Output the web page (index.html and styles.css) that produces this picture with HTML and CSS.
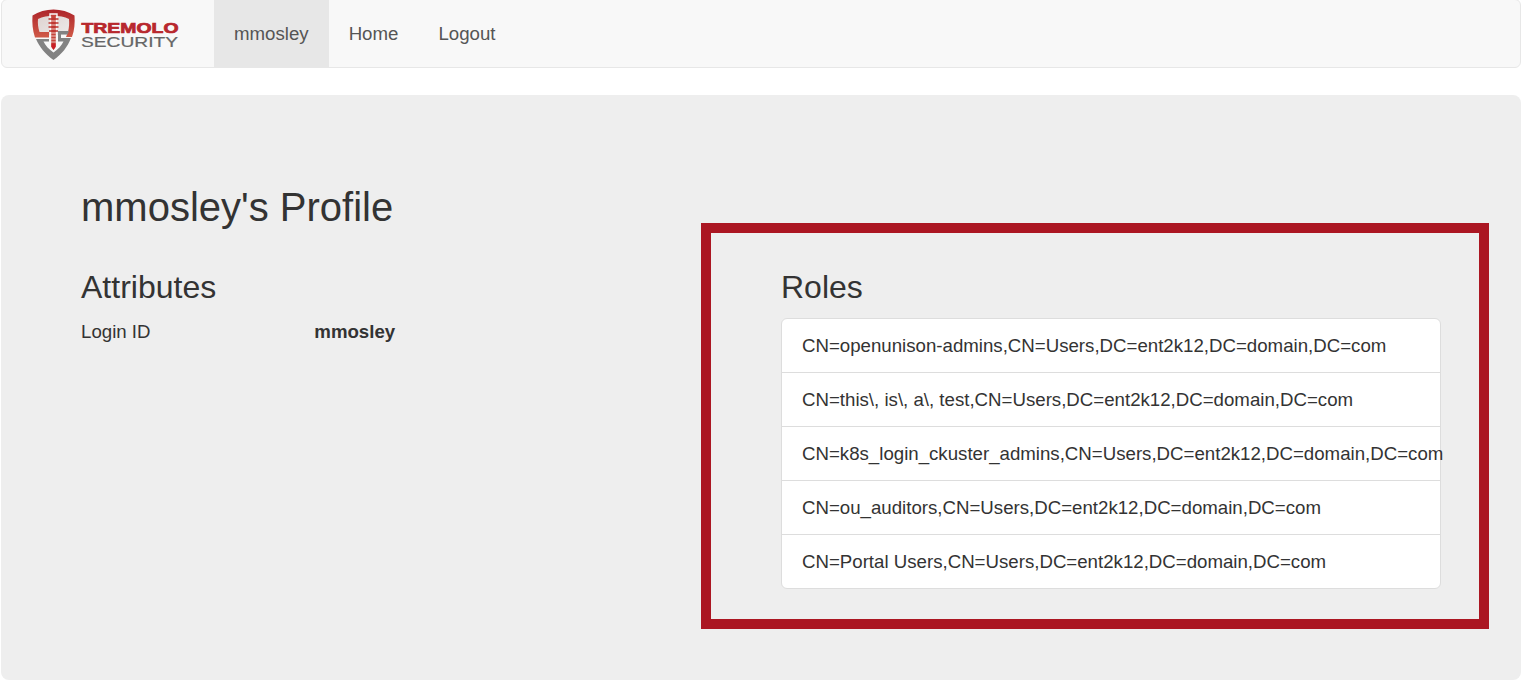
FILE: index.html
```html
<!DOCTYPE html>
<html lang="en">
<head>
<meta charset="utf-8">
<title>mmosley's Profile</title>
<link rel="stylesheet" href="styles.css">
</head>
<body>
<nav class="navbar">
  <a class="brand" aria-label="Tremolo Security">
    <svg class="logo" width="150" height="54" viewBox="30 7 150 54">
      <defs>
        <linearGradient id="red" x1="0" y1="0" x2="0" y2="1">
          <stop offset="0" stop-color="#ad2429"/>
          <stop offset="1" stop-color="#d05a48"/>
        </linearGradient>
        <linearGradient id="shade" x1="0" y1="0" x2="1" y2="1">
          <stop offset="0" stop-color="#dccfcc"/>
          <stop offset="1" stop-color="#eeeceb"/>
        </linearGradient>
      </defs>
      <path d="M53.500 12C47 12 40 13.500 35 17C34.500 24 35 30 37 35H70C72 30 72.500 24 72 17C67 13.500 60 12 53.500 12Z" fill="url(#shade)"/>
      <path d="M53.500 9.500C46 9.500 38.500 11.500 32.500 15.500C32 23 32.500 30 35 37.500H49V32H39.500C38 27 37.600 23 38 19C42.500 16.500 48 16 53.500 16S64.500 16.500 69 19C69.400 23 69.200 27 68 32L66 37H72C74.500 30 75 23 74.500 15.500C68.500 11.500 61 9.500 53.500 9.500Z" fill="url(#red)"/>
      <path d="M36 39H49V41.500H43.500C45.500 45.500 49 49.500 53.500 52.500C58 49.500 61.500 45.500 63.500 41.500H58V31H69L67.500 34.500H61V38H71C67.500 47 62 54 53.500 60C45 54 39.500 47 36 39Z" fill="#828282"/>
      <path d="M50 14H57V17H56.500V47L53.500 51L50.500 47V17H50Z" fill="#c5453c" stroke="#f8f8f8" stroke-width="1.400"/>
      <path d="M48.500 19H58.500M48.500 23H58.500M48.500 27H58.500M49 31H58" stroke="#bd352f" stroke-width="1.500"/>
      <path d="M51 21H56M51 25H56M51 29H56M51 33H56M51 36H56M51 39H56M51 42H56" stroke="#f0cfcb" stroke-width="0.900"/>
      <path d="M51.500 43.500H55.500V47L53.500 50L51.500 47Z" fill="#ca2027"/>
      <text class="wordmark-top" x="81.500" y="33" textLength="97" lengthAdjust="spacingAndGlyphs">TREMOLO</text>
      <text class="wordmark-bottom" x="81" y="46.800" textLength="97" lengthAdjust="spacingAndGlyphs">SECURITY</text>
    </svg>
  </a>
  <a class="nav-link active">mmosley</a>
  <a class="nav-link">Home</a>
  <a class="nav-link">Logout</a>
</nav>
<main class="jumbotron">
  <h2 class="title">mmosley's Profile</h2>
  <div class="columns">
    <section class="attributes">
      <h3 class="heading">Attributes</h3>
      <div class="attribute"><span>Login ID</span><strong>mmosley</strong></div>
    </section>
    <section class="roles">
      <h3 class="heading">Roles</h3>
      <ul class="role-list">
        <li>CN=openunison-admins,CN=Users,DC=ent2k12,DC=domain,DC=com</li>
        <li>CN=this\, is\, a\, test,CN=Users,DC=ent2k12,DC=domain,DC=com</li>
        <li>CN=k8s_login_ckuster_admins,CN=Users,DC=ent2k12,DC=domain,DC=com</li>
        <li>CN=ou_auditors,CN=Users,DC=ent2k12,DC=domain,DC=com</li>
        <li>CN=Portal Users,CN=Users,DC=ent2k12,DC=domain,DC=com</li>
      </ul>
    </section>
  </div>
</main>
</body>
</html>
```
FILE: styles.css
```css
* { box-sizing: border-box; }
html { overflow: hidden; }
body {
  margin: 0 2px 0 1px;
  background: #fff;
  color: #333;
  font: 18.675px/26.667px "Liberation Sans", Arial, sans-serif;
}
.navbar {
  display: flex;
  height: 69px;
  margin-top: -1px;
  margin-bottom: 27px;
  border: 1px solid #e7e7e7;
  border-radius: 6px;
  background: #f8f8f8;
}
.brand {
  width: 212px;
  padding: 7px 0 0 28px;
}
.logo { display: block; }
.wordmark-top {
  font: bold 14px "Liberation Sans", Arial, sans-serif;
  fill: #b8282d;
  stroke: #b8282d;
  stroke-width: 0.7px;
}
.wordmark-bottom {
  font: 14.5px "Liberation Sans", Arial, sans-serif;
  fill: #666;
  stroke: #666;
  stroke-width: 0.2px;
}
.nav-link {
  padding: 21px 20px 19px;
  color: #555;
}
.active { background: #e7e7e7; }
.jumbotron {
  height: 585px;
  padding: 90px 80px 0;
  border-radius: 8px;
  background: #eee;
}
.title {
  margin: 0;
  font-size: 40px;
  font-weight: 400;
  line-height: 44px;
}
.columns {
  display: grid;
  grid-template-columns: 620px 788px;
  align-items: start;
}
.attributes { padding-top: 41px; }
.heading {
  margin: 0 0 14px;
  font-size: 32px;
  font-weight: 400;
  line-height: 35px;
}
.attribute {
  display: grid;
  grid-template-columns: 233.3px auto;
}
.roles {
  height: 406px;
  margin-top: -6px;
  padding: 37px 38px 0 70px;
  border: 10px solid #ab1622;
}
.roles .heading { margin-bottom: 13px; }
.role-list {
  margin: 0;
  padding: 0;
  list-style: none;
  border: 1px solid #ddd;
  border-radius: 6px;
  background: #fff;
}
.role-list li {
  height: 54px;
  padding: 14px 20px 12px;
  border-bottom: 1px solid #ddd;
  white-space: nowrap;
}
.role-list li:last-child {
  height: 53px;
  border-bottom: 0;
}
```
